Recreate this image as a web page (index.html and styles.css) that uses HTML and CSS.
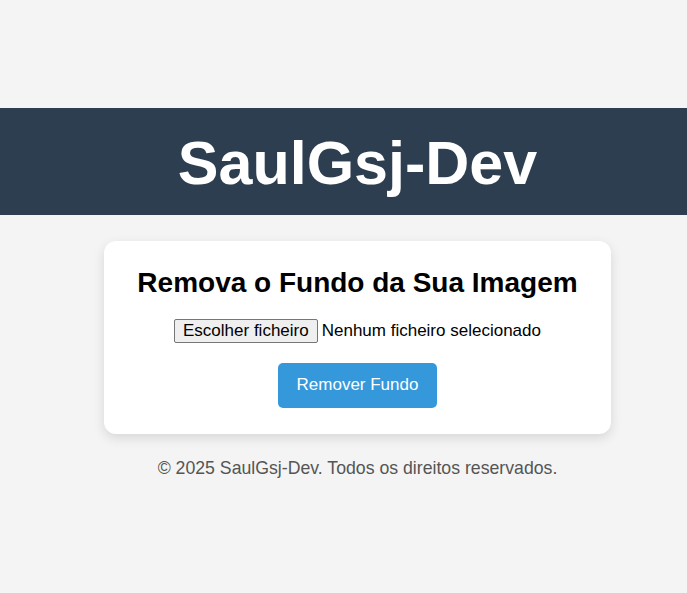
FILE: index.html
```html
<!DOCTYPE html>
<html lang="pt">
<head>
<meta charset="utf-8">
<title>SaulGsj-Dev</title>
<link rel="stylesheet" href="styles.css">
</head>
<body>
  <header class="site-header">
    <h1 class="brand">SaulGsj-Dev</h1>
  </header>
  <main class="card">
    <h2 class="card-title">Remova o Fundo da Sua Imagem</h2>
    <label class="file-picker">
      <span class="file-btn">Escolher ficheiro</span>
      <span class="file-status">Nenhum ficheiro selecionado</span>
    </label>
    <button class="action-btn" type="button">Remover Fundo</button>
  </main>
  <footer class="site-footer">© 2025 SaulGsj-Dev. Todos os direitos reservados.</footer>
</body>
</html>
```
FILE: styles.css
```css
html, body {
  margin: 0;
  padding: 0;
}
body {
  min-height: 100vh;
  background: #f4f4f4;
  font-family: "Liberation Sans", Arial, sans-serif;
  display: flex;
  flex-direction: column;
  justify-content: center;
  align-items: center;
  padding-left: 28px;
  box-sizing: border-box;
  overflow: hidden;
}
.site-header {
  align-self: stretch;
  margin-left: -28px;
  padding: 18px 0 15px 28px;
  background: #2c3e50;
  color: #fff;
  text-align: center;
}
.brand {
  margin: 0;
  font-size: 61px;
  line-height: 74px;
  font-weight: bold;
}
.card {
  margin-top: 26px;
  width: 507px;
  box-sizing: border-box;
  padding: 25px 20px 26px;
  background: #fff;
  border-radius: 12px;
  box-shadow: 0 4px 12px rgba(0, 0, 0, 0.12);
  display: flex;
  flex-direction: column;
  align-items: center;
}
.card-title {
  margin: 1px 0 20px;
  font-size: 28px;
  line-height: 32px;
  color: #000;
}
.file-picker {
  display: flex;
  align-items: center;
  gap: 4px;
  font-size: 17px;
  color: #000;
  margin-bottom: 20px;
}
.file-btn {
  display: inline-block;
  height: 24px;
  box-sizing: border-box;
  padding: 1px 8px;
  line-height: 20px;
  background: #efefef;
  border: 1px solid #767676;
  border-radius: 2px;
}
.file-status {
  line-height: 20px;
}
.action-btn {
  font-family: inherit;
  font-size: 17px;
  line-height: 20px;
  padding: 12px 19px 13px;
  border: 0;
  border-radius: 5px;
  background: #3498db;
  color: #fff;
  cursor: pointer;
}
.site-footer {
  margin-top: 24px;
  padding-bottom: 7px;
  font-size: 17.7px;
  line-height: 20px;
  color: #555;
}
```
